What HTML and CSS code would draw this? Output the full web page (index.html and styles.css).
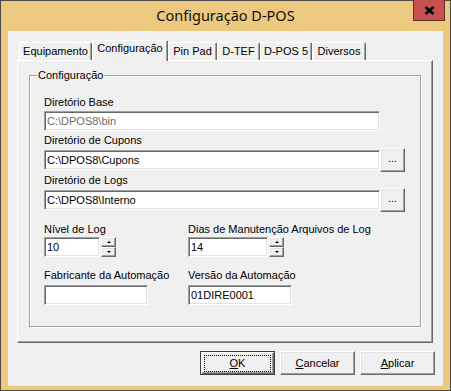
FILE: index.html
```html
<!DOCTYPE html>
<html lang="pt">
<head>
<meta charset="utf-8">
<title>Configuração D-POS</title>
<link rel="stylesheet" href="styles.css">
</head>
<body>
<div class="window">
  <div class="titlebar">
    <div class="title-spacer"></div>
    <div class="title">Configuração D-POS</div>
    <div class="close-wrap">
      <div class="close">
        <svg width="11" height="9" viewBox="0 0 11 9">
          <path d="M1.5 1 L9.5 8 M9.5 1 L1.5 8" stroke="#000" stroke-width="2.6" stroke-linecap="butt"/>
        </svg>
      </div>
    </div>
  </div>
  <div class="client">
    <div class="tabs">
      <div class="tab t-equip">Equipamento</div>
      <div class="tab active t-config">Configuração</div>
      <div class="tab t-pin">Pin Pad</div>
      <div class="tab t-tef">D-TEF</div>
      <div class="tab t-dpos">D-POS 5</div>
      <div class="tab t-div">Diversos</div>
    </div>
    <div class="panel">
      <div class="group">
        <span class="group-label">Configuração</span>
        <div class="field r1">
          <div class="lbl">Diretório Base</div>
          <input class="edit wide" type="text" value="C:\DPOS8\bin" disabled>
        </div>
        <div class="field r2">
          <div class="lbl">Diretório de Cupons</div>
          <div class="line">
            <input class="edit wide" type="text" value="C:\DPOS8\Cupons">
            <button class="btn browse">...</button>
          </div>
        </div>
        <div class="field r3">
          <div class="lbl">Diretório de Logs</div>
          <div class="line">
            <input class="edit wide" type="text" value="C:\DPOS8\Interno">
            <button class="btn browse">...</button>
          </div>
        </div>
        <div class="cols r4">
          <div class="field">
            <div class="lbl">Nível de Log</div>
            <div class="line spin-line">
              <input class="edit nivel" type="text" value="10">
              <div class="spin">
                <div class="btn spin-btn"><span class="arrow up"></span></div>
                <div class="btn spin-btn"><span class="arrow down"></span></div>
              </div>
            </div>
          </div>
          <div class="field">
            <div class="lbl">Dias de Manutenção Arquivos de Log</div>
            <div class="line spin-line">
              <input class="edit dias" type="text" value="14">
              <div class="spin">
                <div class="btn spin-btn"><span class="arrow up"></span></div>
                <div class="btn spin-btn"><span class="arrow down"></span></div>
              </div>
            </div>
          </div>
        </div>
        <div class="cols r5">
          <div class="field">
            <div class="lbl">Fabricante da Automação</div>
            <input class="edit short" type="text" value="">
          </div>
          <div class="field">
            <div class="lbl">Versão da Automação</div>
            <input class="edit short" type="text" value="01DIRE0001">
          </div>
        </div>
      </div>
    </div>
    <div class="buttons">
      <button class="btn action default"><span class="focus"><u>O</u>K</span></button>
      <button class="btn action"><u>C</u>ancelar</button>
      <button class="btn action"><u>A</u>plicar</button>
    </div>
  </div>
</div>
</body>
</html>
```

FILE: styles.css
```css
* { box-sizing: border-box; }
html, body { margin: 0; padding: 0; }
body {
  width: 451px;
  height: 391px;
  overflow: hidden;
  font-family: "Liberation Sans", Arial, sans-serif;
  font-size: 11px;
  color: #000;
}
.window {
  width: 451px;
  height: 391px;
  background: #edc97f;
  border: 1px solid #4a4a4a;
  display: flex;
  flex-direction: column;
}
.titlebar {
  height: 30px;
  display: grid;
  grid-template-columns: 1fr auto 1fr;
  align-items: start;
}
.title {
  font-family: "Noto Sans", "Open Sans", sans-serif;
  font-size: 14.5px;
  line-height: 20px;
  margin-top: 4px;
  color: #111;
}
.close-wrap {
  display: flex;
  justify-content: flex-end;
  padding-right: 5px;
}
.close {
  width: 32px;
  height: 21px;
  margin-top: -1px;
  background: #c75050;
  border: 1px solid #5e3030;
  border-top: none;
  display: flex;
  align-items: center;
  justify-content: center;
  padding-top: 1px;
}
.client {
  flex: 1;
  margin: 0 7px 4px 7px;
  background: #f0f0f0;
  display: flex;
  flex-direction: column;
  padding: 9px 10px 11px 9px;
}
.tabs {
  display: flex;
  align-items: flex-end;
  height: 20px;
  padding-left: 2px;
  position: relative;
  z-index: 1;
}
.tab {
  height: 18px;
  line-height: 16px;
  text-align: center;
  background: #f0f0f0;
  border-top: 1px solid #fff;
  border-left: 1px solid #fff;
  border-right: 1px solid #696969;
  box-shadow: inset -1px 0 0 #a0a0a0;
  border-radius: 2px 2px 0 0;
  white-space: nowrap;
}
.tab.active {
  height: 21px;
  margin-bottom: -1px;
  line-height: 15px;
}
.t-equip { width: 73px; }
.t-config { width: 76px; }
.t-pin { width: 49px; }
.t-tef { width: 43px; }
.t-dpos { width: 52px; }
.t-div { width: 54px; }

.panel {
  height: 283px;
  border-top: 1px solid #fff;
  border-left: 1px solid #fff;
  border-right: 1px solid #696969;
  border-bottom: 1px solid #696969;
  box-shadow: inset -1px -1px 0 #a0a0a0;
  padding: 14px 11px 15px 11px;
}
.group {
  position: relative;
  height: 252px;
  border: 1px solid #a0a0a0;
  box-shadow: inset 1px 1px 0 #fff, 1px 1px 0 #fff;
  padding: 20px 14px 0 14px;
}
.group-label {
  position: absolute;
  top: -7px;
  left: 7px;
  line-height: 13px;
  padding: 0 1px;
  background: #f0f0f0;
}
.field { display: flex; flex-direction: column; align-items: flex-start; }
.lbl { line-height: 13px; white-space: nowrap; }
.line { display: flex; align-items: center; }

.edit {
  height: 20px;
  margin: 0;
  padding: 0 2px;
  font-family: "Liberation Sans", Arial, sans-serif;
  font-size: 11px;
  color: #000;
  background: #fff;
  border: 1px solid;
  border-color: #a0a0a0 #fff #fff #a0a0a0;
  box-shadow: inset 1px 1px 0 #696969, inset -1px -1px 0 #e3e3e3;
  outline: none;
  border-radius: 0;
}
.edit:disabled { color: #6d6d6d; background: #fff; }
.wide { width: 336px; }
.nivel { width: 56px; }
.dias { width: 80px; }
.short { width: 104px; }

.r1 .lbl { margin-bottom: 2px; }
.r2 { margin-top: 3px; }
.r2 .lbl, .r3 .lbl { margin-bottom: 1px; }
.r3 { margin-top: 2px; }
.r4 { margin-top: 11px; }
.r4 .lbl { margin-bottom: 1px; }
.r5 { margin-top: 12px; }
.r5 .lbl { margin-bottom: 3px; }

.cols {
  display: grid;
  grid-template-columns: 144px auto;
}

.btn {
  font-family: "Liberation Sans", Arial, sans-serif;
  font-size: 11px;
  color: #000;
  background: #f0f0f0;
  border: 1px solid;
  border-color: #fff #696969 #696969 #fff;
  box-shadow: inset -1px -1px 0 #a0a0a0, inset 1px 1px 0 #e3e3e3;
  margin: 0;
  padding: 0;
  border-radius: 0;
}
.browse {
  width: 25px;
  height: 24px;
  line-height: 18px;
  padding-bottom: 4px;
}
.spin-line { align-items: flex-start; }
.spin {
  display: flex;
  flex-direction: column;
  margin-left: 1px;
}
.spin-btn {
  width: 15px;
  height: 10px;
  display: flex;
  align-items: center;
  justify-content: center;
}
.arrow {
  width: 0;
  height: 0;
  border-left: 2px solid transparent;
  border-right: 2px solid transparent;
}
.arrow.up { border-bottom: 2px solid #000; }
.arrow.down { border-top: 2px solid #000; }

.buttons {
  display: flex;
  justify-content: flex-end;
  gap: 5px;
  margin-top: 8px;
  margin-right: -2px;
}
.action {
  width: 75px;
  height: 24px;
  line-height: 20px;
}
.action.default {
  border: 1px solid #3c3c3c;
  box-shadow: inset 1px 1px 0 #fff, inset -1px -1px 0 #696969, inset -2px -2px 0 #a0a0a0;
  padding: 3px 3px 2px 3px;
}
.focus {
  display: block;
  height: 17px;
  line-height: 15px;
  border: 1px dotted #000;
}
u { text-decoration: underline; text-underline-offset: 1px; }
```
